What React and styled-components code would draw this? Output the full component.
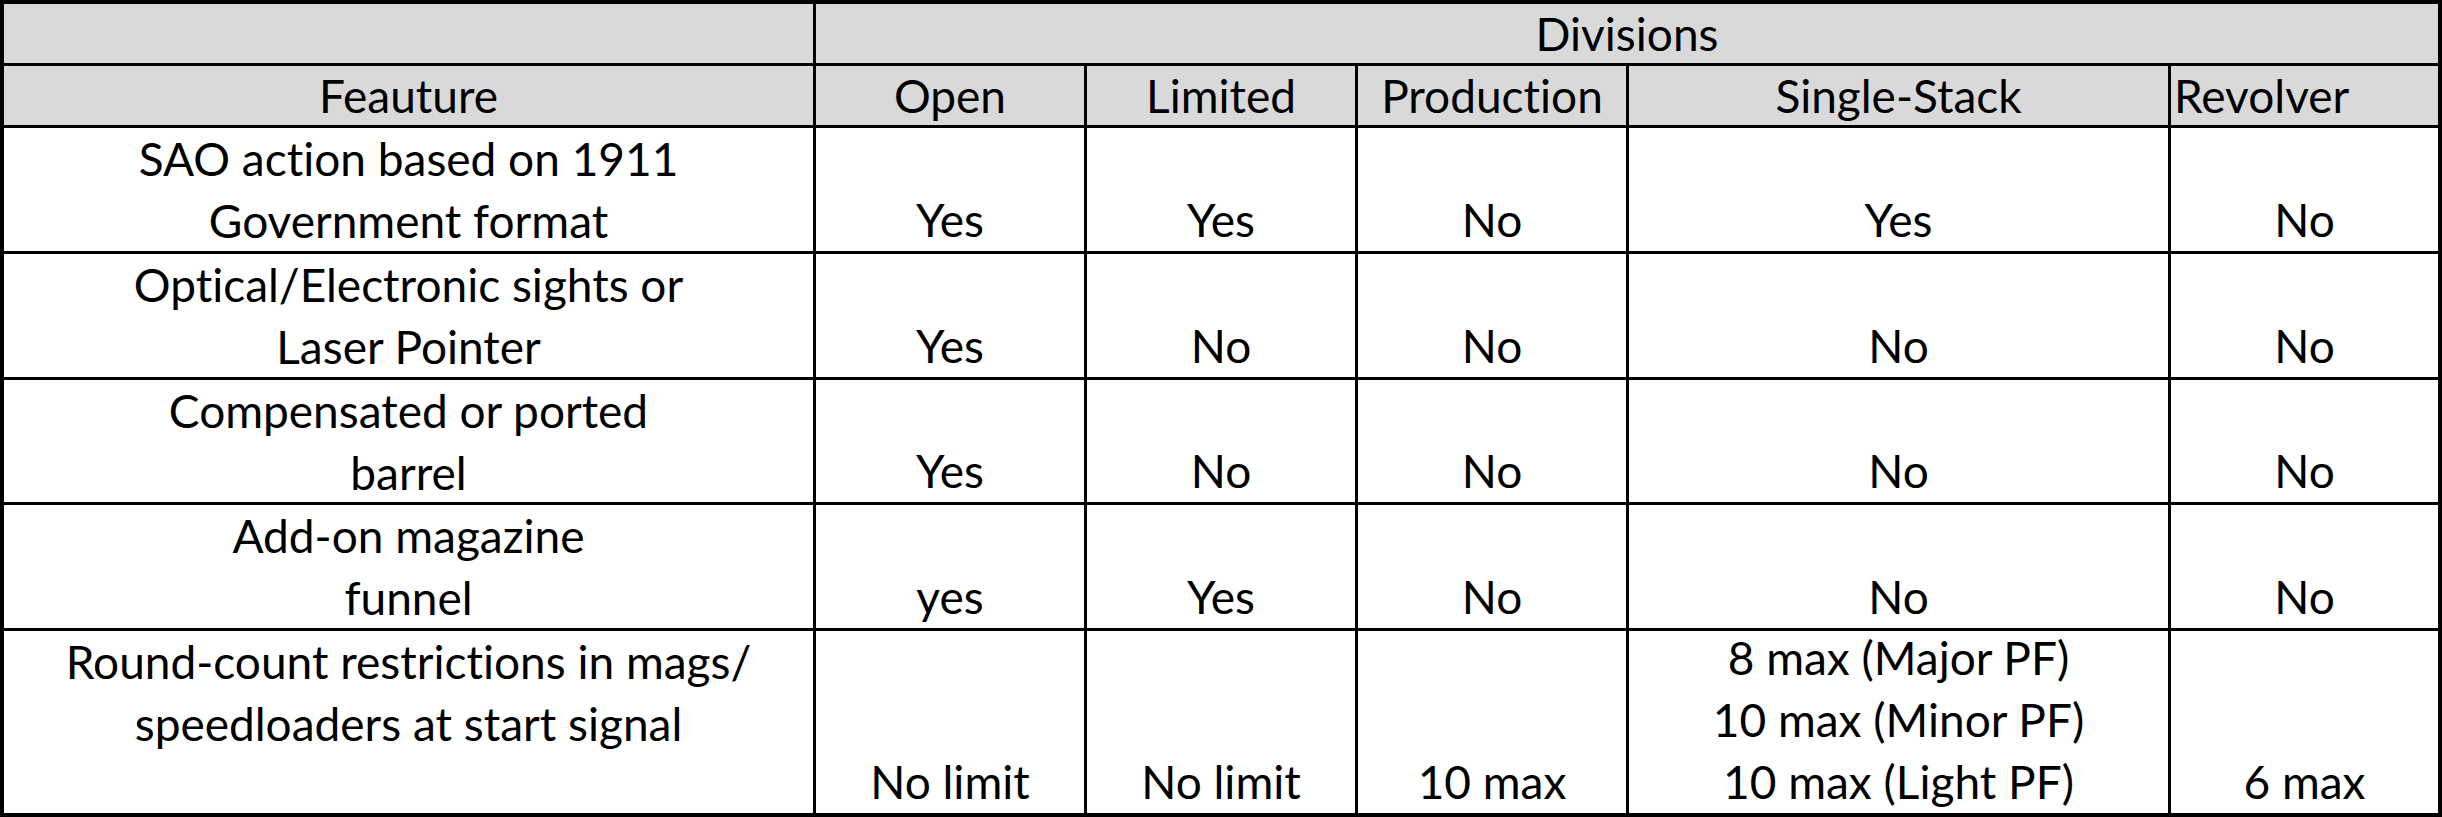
import React from "react";
import styled, { createGlobalStyle } from "styled-components";

const GlobalStyle = createGlobalStyle`
  html, body {
    margin: 0;
    padding: 0;
    background: #ffffff;
  }
  body {
    font-family: Lato, "Open Sans", "Liberation Sans", sans-serif;
    color: #000000;
  }
`;

const Sheet = styled.div`
  box-sizing: border-box;
  width: 2442px;
  height: 817px;
  display: grid;
  grid-template-columns: 812px 271px 271px 271px 542px 271px;
  grid-template-rows: 62px 62px 126px 126px 125px 126px 186px;
  border-top: 4px solid #000;
  border-left: 4px solid #000;
  font-size: 46px;
  line-height: 62px;
  font-variant-ligatures: none;
  font-feature-settings: "liga" 0, "dlig" 0;
`;

const Cell = styled.div`
  box-sizing: border-box;
  display: flex;
  flex-direction: column;
  align-items: ${(p) => p.$align || "center"};
  justify-content: ${(p) => p.$valign || "flex-end"};
  grid-column: ${(p) => (p.$span ? `span ${p.$span}` : "auto")};
  border-right: ${(p) => (p.$lastCol ? 4 : 3)}px solid #000;
  border-bottom: ${(p) => (p.$lastRow ? 4 : 3)}px solid #000;
  background: ${(p) => (p.$head ? "#d9d9d9" : "#ffffff")};
  padding: ${(p) => p.$pad || "0"};
  text-align: center;
  white-space: nowrap;
  overflow: visible;
`;

const Line = styled.span`
  display: block;
`;

const divisions = ["Open", "Limited", "Production", "Single-Stack", "Revolver"];

const rows = [
  {
    feature: ["SAO action based on 1911", "Government format"],
    values: [["Yes"], ["Yes"], ["No"], ["Yes"], ["No"]],
  },
  {
    feature: ["Optical/Electronic sights or", "Laser Pointer"],
    values: [["Yes"], ["No"], ["No"], ["No"], ["No"]],
  },
  {
    feature: ["Compensated or ported", "barrel"],
    values: [["Yes"], ["No"], ["No"], ["No"], ["No"]],
  },
  {
    feature: ["Add-on magazine", "funnel"],
    values: [["yes"], ["Yes"], ["No"], ["No"], ["No"]],
  },
  {
    feature: ["Round-count restrictions in mags/", "speedloaders at start signal"],
    values: [
      ["No limit"],
      ["No limit"],
      ["10 max"],
      ["8 max (Major PF)", "10 max (Minor PF)", "10 max (Light PF)"],
      ["6 max"],
    ],
  },
];

export default function App() {
  return (
    <>
      <GlobalStyle />
      <Sheet>
        <Cell $head $valign="center" />
        <Cell $head $valign="center" $span={5} $lastCol>
          Divisions
        </Cell>

        <Cell $head $valign="center">Feauture</Cell>
        {divisions.map((d, i) => (
          <Cell
            key={d}
            $head
            $valign="center"
            $lastCol={i === divisions.length - 1}
            $align={d === "Revolver" ? "flex-start" : "center"}
            $pad={d === "Revolver" ? "0 0 0 3px" : "0"}
          >
            {d}
          </Cell>
        ))}

        {rows.map((row, r) => {
          const last = r === rows.length - 1;
          return (
            <React.Fragment key={r}>
              <Cell $valign="flex-start" $lastRow={last}>
                {row.feature.map((t) => (
                  <Line key={t}>{t}</Line>
                ))}
              </Cell>
              {row.values.map((v, c) => (
                <Cell
                  key={c}
                  $valign="flex-end"
                  $lastRow={last}
                  $lastCol={c === row.values.length - 1}
                >
                  {v.map((t) => (
                    <Line key={t}>{t}</Line>
                  ))}
                </Cell>
              ))}
            </React.Fragment>
          );
        })}
      </Sheet>
    </>
  );
}
